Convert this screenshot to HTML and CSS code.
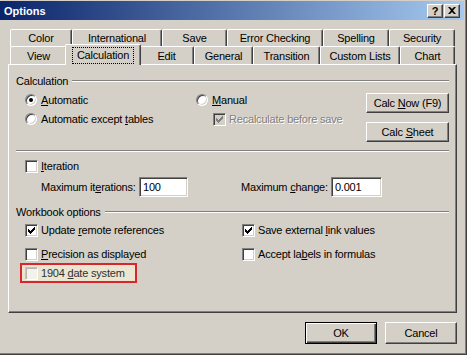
FILE: index.html
```html
<!DOCTYPE html>
<html lang="en">
<head>
  <meta charset="UTF-8">
  <title>Options</title>
  <link rel="stylesheet" href="styles.css">
</head>
<body>
  <div class="window">
    <div class="titlebar">
      <span class="title">Options</span>
      <div class="caption-buttons">
        <button class="caption-btn">?</button>
        <button class="caption-btn">
          <svg width="8" height="7" viewBox="0 0 8 7"><path d="M0 0h2l2 2 2-2h2L5 3.5 8 7H6L4 5 2 7H0l3-3.5z" fill="#000"/></svg>
        </button>
      </div>
    </div>

    <!-- Tabs: back row, then front row with the selected tab -->
    <div class="tabs">
      <div class="tab-row back">
        <div class="tab">Color</div>
        <div class="tab">International</div>
        <div class="tab">Save</div>
        <div class="tab">Error Checking</div>
        <div class="tab">Spelling</div>
        <div class="tab">Security</div>
      </div>
      <div class="tab-row front">
        <div class="tab">View</div>
        <div class="tab active"><span class="focus">Calculation</span></div>
        <div class="tab">Edit</div>
        <div class="tab">General</div>
        <div class="tab">Transition</div>
        <div class="tab">Custom Lists</div>
        <div class="tab">Chart</div>
      </div>
    </div>

    <div class="panel">
      <div class="group-title"><span>Calculation</span></div>

      <div class="calc-area">
        <div class="col-auto">
          <div class="option"><span class="radio checked"></span><span><u>A</u>utomatic</span></div>
          <div class="option"><span class="radio"></span><span>Automatic except <u>t</u>ables</span></div>
        </div>
        <div class="col-manual">
          <div class="option"><span class="radio"></span><span><u>M</u>anual</span></div>
          <div class="option sub">
            <span class="check disabled">
              <svg width="7" height="7" viewBox="0 0 7 7" fill="#808080"><rect x="0" y="2" width="1" height="3"/><rect x="1" y="3" width="1" height="3"/><rect x="2" y="4" width="1" height="3"/><rect x="3" y="3" width="1" height="3"/><rect x="4" y="2" width="1" height="3"/><rect x="5" y="1" width="1" height="3"/><rect x="6" y="0" width="1" height="3"/></svg>
            </span>
            <span class="grey-text">Recalculate before save</span>
          </div>
        </div>
        <div class="calc-buttons">
          <button class="btn calc">Calc <u>N</u>ow (F9)</button>
          <button class="btn calc">Calc <u>S</u>heet</button>
        </div>
      </div>

      <div class="separator"></div>

      <div class="option iter-row"><span class="check"></span><span><u>I</u>teration</span></div>

      <div class="max-row">
        <div class="max-left">
          <span class="label-iter">Maximum it<u>e</u>rations:</span>
          <span class="field">100</span>
        </div>
        <div class="max-right">
          <span class="label-change">Maximum <u>c</u>hange:</span>
          <span class="field wide">0.001</span>
        </div>
      </div>

      <div class="group-title workbook"><span>Workbook options</span></div>

      <div class="wb-row first">
        <div class="cell-left option">
          <span class="check">
            <svg width="7" height="7" viewBox="0 0 7 7"><rect x="0" y="2" width="1" height="3"/><rect x="1" y="3" width="1" height="3"/><rect x="2" y="4" width="1" height="3"/><rect x="3" y="3" width="1" height="3"/><rect x="4" y="2" width="1" height="3"/><rect x="5" y="1" width="1" height="3"/><rect x="6" y="0" width="1" height="3"/></svg>
          </span>
          <span>Update <u>r</u>emote references</span>
        </div>
        <div class="option">
          <span class="check">
            <svg width="7" height="7" viewBox="0 0 7 7"><rect x="0" y="2" width="1" height="3"/><rect x="1" y="3" width="1" height="3"/><rect x="2" y="4" width="1" height="3"/><rect x="3" y="3" width="1" height="3"/><rect x="4" y="2" width="1" height="3"/><rect x="5" y="1" width="1" height="3"/><rect x="6" y="0" width="1" height="3"/></svg>
          </span>
          <span>Save external <u>l</u>ink values</span>
        </div>
      </div>
      <div class="wb-row second">
        <div class="cell-left option"><span class="check"></span><span><u>P</u>recision as displayed</span></div>
        <div class="option"><span class="check"></span><span>Accept la<u>b</u>els in formulas</span></div>
      </div>
      <div class="wb-row third">
        <div class="highlight option"><span class="check faded"></span><span class="dim-text">1904 <u>d</u>ate system</span></div>
      </div>
    </div>

    <div class="footer">
      <button class="btn default">OK</button>
      <button class="btn">Cancel</button>
    </div>
  </div>
</body>
</html>
```

FILE: styles.css
```css
body {
  margin: 0;
  background-color: #d4d0c8;
  font-family: "Liberation Sans", Arial, sans-serif;
  font-size: 11px;
  letter-spacing: -0.2px;
  color: #000;
}

.window {
  width: 467px;
  height: 355px;
  box-sizing: border-box;
  border-right: 1px solid #404040;
  border-bottom: 1px solid #404040;
  box-shadow: inset -1px -1px #808080;
  overflow: hidden;
}

/* Title bar */
.titlebar {
  height: 19px;
  margin: 1px 2px 0 0;
  padding: 0 4px;
  display: flex;
  align-items: center;
  background: linear-gradient(to right, #0a246a, #a6caf0);
}

.title {
  color: #fff;
  font-weight: bold;
  letter-spacing: 0;
}

.caption-buttons {
  margin-left: auto;
  display: flex;
  gap: 1px;
}

.caption-btn {
  width: 16px;
  height: 14px;
  padding: 0;
  display: flex;
  align-items: center;
  justify-content: center;
  font-family: "Liberation Sans", Arial, sans-serif;
  font-size: 11px;
  font-weight: bold;
  background: #d4d0c8;
  border: 1px solid;
  border-color: #fff #404040 #404040 #fff;
  box-shadow: inset -1px -1px #808080;
}

/* Tabs */
.tabs {
  margin-top: 9px;
  padding-left: 10px;
}

.tab-row {
  display: grid;
}

.tab-row.back {
  grid-template-columns: 62px 90px 65px 96px 66px 66px;
  grid-template-rows: 17px;
}

.tab-row.front {
  grid-template-columns: 57px 72px 55px 59px 67px 80px 55px;
  grid-template-rows: 18px;
}

.tab {
  display: flex;
  align-items: center;
  justify-content: center;
  box-sizing: border-box;
  border-top: 1px solid #fff;
  border-left: 1px solid #fff;
  border-right: 1px solid #404040;
  box-shadow: inset -1px 0 #808080;
  border-radius: 2px 2px 0 0;
  background: #d4d0c8;
  white-space: nowrap;
}

.tab.active {
  margin: -2px -2px -1px;
  position: relative;
  z-index: 1;
}

.focus {
  border: 1px dotted #000;
  padding: 1px 4px 2px;
}

/* Panel */
.panel {
  margin-left: 8px;
  width: 449px;
  height: 249px;
  box-sizing: border-box;
  border: 1px solid;
  border-color: #fff #404040 #404040 #fff;
  box-shadow: inset -1px -1px #808080;
  padding: 9px 7px 0;
}

.group-title {
  display: flex;
  align-items: center;
  height: 13px;
}

.group-title::after {
  content: "";
  flex: 1;
  margin-left: 4px;
  border-top: 1px solid #808080;
  border-bottom: 1px solid #fff;
}

.group-title.workbook {
  margin-top: 8px;
}

.calc-area {
  display: flex;
  margin-top: 5px;
  padding-left: 9px;
}

.col-auto {
  width: 171px;
  display: flex;
  flex-direction: column;
  gap: 3px;
}

.col-manual {
  display: flex;
  flex-direction: column;
  gap: 3px;
}

.option {
  display: flex;
  align-items: center;
  height: 16px;
  white-space: nowrap;
}

.option.sub {
  padding-left: 17px;
}

.grey-text {
  color: #808080;
  text-shadow: 1px 1px #fff;
}

.dim-text {
  color: #303030;
}

.radio {
  width: 12px;
  height: 12px;
  margin-right: 4px;
  flex: none;
  box-sizing: border-box;
  border-radius: 50%;
  background: #fff;
  border: 1px solid;
  border-color: #808080 #fff #fff #808080;
  box-shadow: inset 1px 1px #404040, inset -1px -1px #d4d0c8;
  display: flex;
  align-items: center;
  justify-content: center;
}

.radio.checked::after {
  content: "";
  width: 4px;
  height: 4px;
  border-radius: 50%;
  background: #000;
}

.check {
  width: 13px;
  height: 13px;
  margin-right: 3px;
  flex: none;
  box-sizing: border-box;
  background: #fff;
  border: 1px solid;
  border-color: #808080 #fff #fff #808080;
  box-shadow: inset 1px 1px #404040, inset -1px -1px #d4d0c8;
  display: flex;
  align-items: center;
  justify-content: center;
}

.check.disabled {
  background: #d4d0c8;
}

.check.faded {
  background: #f4f2ec;
  border-color: #c8c4bc #fff #fff #c8c4bc;
  box-shadow: inset 1px 1px #b8b4ac;
}

.calc-buttons {
  margin-left: auto;
  margin-top: 1px;
  display: flex;
  flex-direction: column;
  gap: 9px;
}

/* Buttons */
.btn {
  height: 22px;
  width: 72px;
  padding: 0;
  font-family: "Liberation Sans", Arial, sans-serif;
  font-size: 11px;
  letter-spacing: -0.2px;
  color: #000;
  background: #d4d0c8;
  border: 1px solid;
  border-color: #fff #404040 #404040 #fff;
  box-shadow: inset -1px -1px #808080;
}

.btn.calc {
  width: 83px;
  height: 20px;
}

.btn.default {
  border-color: #000;
  box-shadow: inset 1px 1px #fff, inset -1px -1px #404040, inset -2px -2px #808080;
}

.separator {
  margin-top: 8px;
  border-top: 1px solid #808080;
  border-bottom: 1px solid #fff;
}

.iter-row {
  margin-top: 6px;
  padding-left: 9px;
}

.max-row {
  display: flex;
  margin-top: 3px;
  height: 20px;
}

.max-left {
  width: 225px;
  padding-left: 25px;
  box-sizing: border-box;
  display: flex;
  align-items: center;
}

.max-right {
  display: flex;
  align-items: center;
}

.label-iter {
  width: 98px;
  white-space: nowrap;
}

.label-change {
  min-width: 84px;
  margin-right: 3px;
  white-space: nowrap;
}

.field {
  width: 49px;
  height: 20px;
  box-sizing: border-box;
  padding-left: 3px;
  display: flex;
  align-items: center;
  background: #fff;
  border: 1px solid;
  border-color: #808080 #fff #fff #808080;
  box-shadow: inset 1px 1px #404040, inset -1px -1px #d4d0c8;
}

.field.wide {
  width: 51px;
}

.wb-row {
  display: flex;
}

.wb-row.first {
  margin-top: 4px;
}

.wb-row.second {
  margin-top: 8px;
}

.wb-row.third {
  margin-top: 1px;
  padding-left: 4px;
}

.cell-left {
  width: 226px;
  padding-left: 9px;
  box-sizing: border-box;
}

.highlight {
  width: 117px;
  height: 20px;
  box-sizing: border-box;
  padding-left: 3px;
  border: 2px solid #d9252b;
  background: #ebe6d2;
}

/* Footer */
.footer {
  display: flex;
  justify-content: flex-end;
  gap: 8px;
  margin-top: 9px;
  padding-right: 9px;
}
```
